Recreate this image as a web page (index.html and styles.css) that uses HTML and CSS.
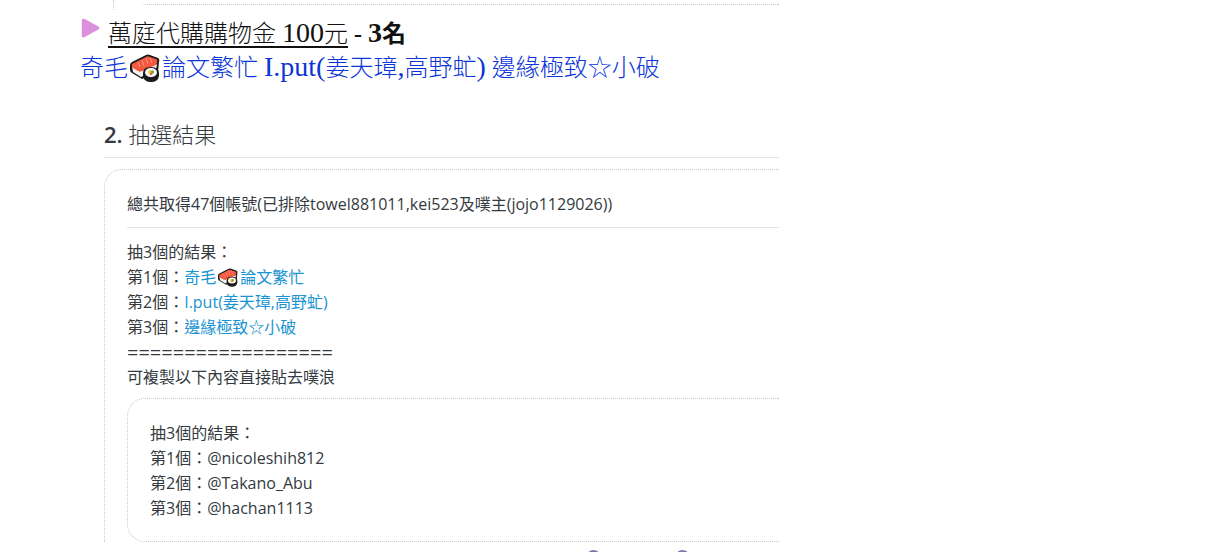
FILE: index.html
```html
<!DOCTYPE html>
<html lang="zh-Hant">
<head>
<meta charset="utf-8">
<title>抽選結果</title>
<link rel="stylesheet" href="styles.css">
</head>
<body>
<svg class="defs" width="0" height="0" aria-hidden="true">
  <symbol id="sushi" viewBox="0 0 30 28">
    <path d="M0 11Q0 9 2 8L16 1Q18 0 20 1L28 4Q30 5 29 8L28 18 12 25 2 19Q0 18 0 16Z" fill="#1c1b1c"/>
    <path d="M2 12 11 17 27 10 26 16 11 23 3 18Z" fill="#f4f1ee"/>
    <path d="M2 10 17 2.500Q18 2 20 3L27 5.500Q28 8 26 11L12 17Q10 18 8 17L3 14Q1 12 2 10Z" fill="#f5573f"/>
    <path d="M8 8 10 13M12 6 14 12M16 4 18 10M20 4 22 9" stroke="#ff9a82" stroke-width="1" fill="none"/>
    <path d="M13 19Q13 13 21 13 29 13 29 19V22Q28 28 21 28 14 28 13 22Z" fill="#1c1b1c"/>
    <ellipse cx="21" cy="18.500" rx="6" ry="4.500" fill="#fff"/>
    <circle cx="20" cy="18" r="2" fill="#f3cf2b"/>
    <circle cx="22.500" cy="18" r="1.700" fill="#78a83a"/>
    <circle cx="21" cy="20" r="1.300" fill="#f0653e"/>
  </symbol>
</svg>
<main class="article">
  <div class="shot-previous"><div class="card-end"></div></div>
  <h2 class="prize"><svg class="marker" viewBox="0 0 18 20" aria-hidden="true"><path d="M3 3 16 10 3 17Z" fill="#dc8fdc" stroke="#dc8fdc" stroke-width="3" stroke-linejoin="round"/></svg><span class="prize-text"><u>萬庭代購購物金 <span class="num">100</span>元</u> <b>- <span class="num">3</span>名</b></span></h2>
  <p class="winners">奇毛<svg class="sushi-large" role="img" aria-label="壽司"><use href="#sushi"/></svg>論文繁忙 <span class="latin">I.put(</span>姜天璋<span class="latin">,</span>高野虻<span class="latin">)</span> 邊緣極致☆小破</p>
  <section class="shot">
    <h3 class="result-title"><b>2.</b> 抽選結果</h3>
    <div class="card">
      <p class="summary">總共取得47個帳號(已排除towel881011,kei523及噗主(jojo1129026))</p>
      <p>抽3個的結果：</p>
      <p>第1個：<a href="#w1">奇毛<svg class="sushi-small" role="img" aria-label="壽司"><use href="#sushi"/></svg>論文繁忙</a></p>
      <p>第2個：<a href="#w2">I.put(姜天璋,高野虻)</a></p>
      <p>第3個：<a href="#w3">邊緣極致☆小破</a></p>
      <p class="divider">==================</p>
      <p>可複製以下內容直接貼去噗浪</p>
      <div class="card card-inner">
        <p>抽3個的結果：</p>
        <p id="w1">第1個：@nicoleshih812</p>
        <p id="w2">第2個：@Takano_Abu</p>
        <p id="w3">第3個：@hachan1113</p>
      </div>
    </div>
  </section>
  <div class="next" aria-hidden="true"><i class="ring"></i><i class="ring"></i></div>
</main>
</body>
</html>
```
FILE: styles.css
```css
* { box-sizing: border-box; }
html, body { height: 100%; }
body { margin: 0; background: #fff; overflow: hidden; }
h2, h3, p { margin: 0; font-weight: 400; }
.defs { position: absolute; }
.article {
  display: flow-root;
  padding-left: 80px;
  font-family: "Liberation Serif", "Noto Sans CJK TC", serif;
  font-size: 24px;
  line-height: 34px;
  color: #111;
}
.shot {
  max-width: 699px;
  padding-left: 24px;
  font-family: "Open Sans", "Noto Sans CJK TC", sans-serif;
  font-size: 16px;
  line-height: 25px;
  color: #343a40;
  overflow: hidden;
}
.shot-previous {
  max-width: 666px;
  height: 10px;
  margin: 0 0 7px 33px;
  border-left: 1px dotted #c8c8c8;
}
.card-end {
  height: 5px;
  margin-left: 27px;
  border-bottom: 1px dotted #c8c8c8;
  border-radius: 0 0 0 18px;
}
.prize { display: flex; align-items: flex-start; gap: 8px; font-size: 24px; }
.marker { width: 20px; height: 22px; }
.prize u { text-decoration-thickness: 2px; text-underline-offset: 4px; font-weight: 300; }
.num { font-size: 28px; line-height: 24px; }
.latin { font-size: 28px; line-height: 24px; }
.winners { color: #0b35d8; font-weight: 300; }
.sushi-large { width: 30px; height: 28px; margin: 0 2px; vertical-align: -6px; }
.sushi-small { width: 20px; height: 19px; margin: 0 2px; vertical-align: -4px; }
.result-title {
  margin-top: 32px;
  padding-bottom: 6px;
  border-bottom: 1px solid #e4e4e4;
  font-size: 22px;
  font-weight: 300;
  line-height: 34px;
}
.result-title b { font-weight: 600; }
.card {
  margin-top: 11px;
  padding: 22px 0 0 22px;
  border: 1px dotted #c8c8c8;
  border-width: 1px 0 0 1px;
  border-radius: 18px 0 0 0;
}
.summary { padding-bottom: 10px; margin-bottom: 12px; border-bottom: 1px solid #e4e4e4; }
.card a { color: #1a94d2; text-decoration: none; }
.divider { font-size: 20px; }
.card-inner {
  margin-top: 8px;
  padding-bottom: 20px;
  border-width: 1px 0 1px 1px;
  border-radius: 18px 0 0 18px;
}
.next { display: flex; gap: 74px; padding: 8px 0 0 506px; }
.ring { width: 15px; height: 15px; border: 2px solid #7f78ad; border-radius: 50%; }
```
